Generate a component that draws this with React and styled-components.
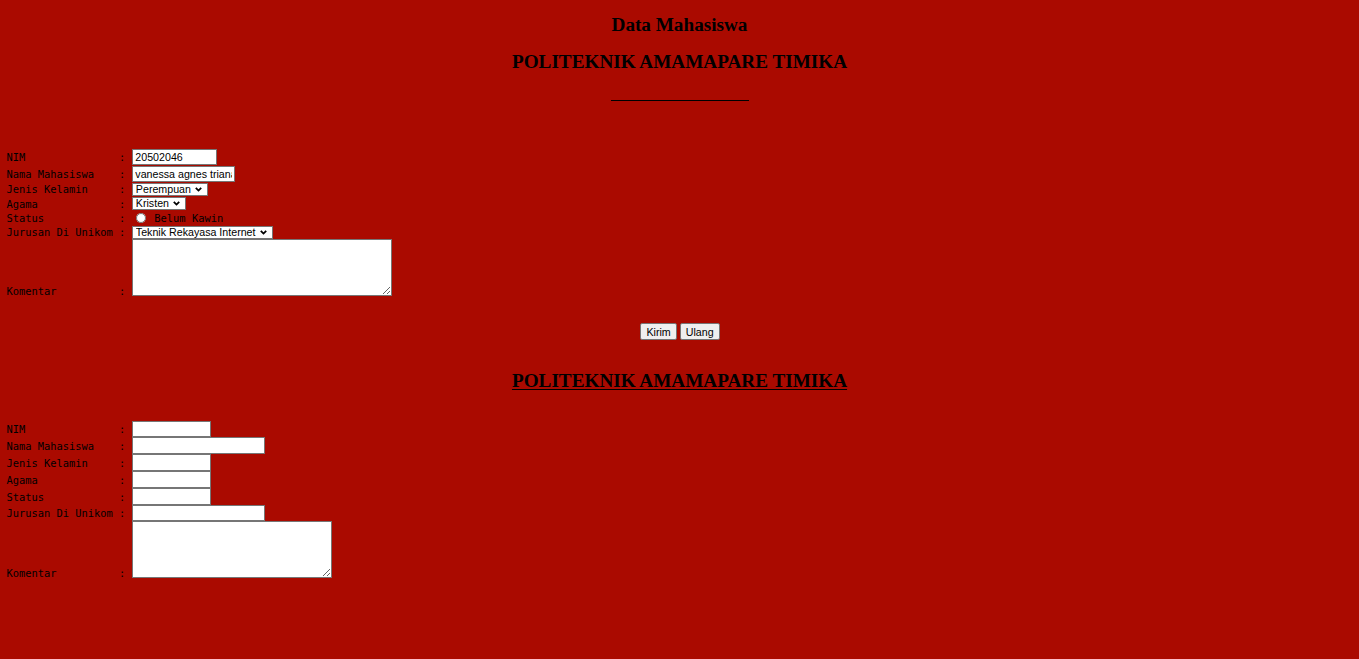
import React from 'react'
import styled, { createGlobalStyle } from 'styled-components'

const GlobalStyle = createGlobalStyle`
    html, body {
        margin: 0;
        padding: 0;
        background: #aa0a00;
    }
    body {
        font-family: "Liberation Serif", "Times New Roman", serif;
        color: #000;
    }
`

const Page = styled.div`
    min-height: 659px;
    background: #aa0a00;
    padding: 14px 0 40px 0;
    box-sizing: border-box;
`

const Heading = styled.h3`
    margin: ${p => p.$top || 0}px 0 0 0;
    font-family: "Liberation Serif", "Times New Roman", serif;
    font-size: 19.2px;
    line-height: 22px;
    font-weight: bold;
    text-align: center;
    text-decoration: ${p => (p.$underline ? 'underline' : 'none')};
    text-underline-offset: 2px;
`

const Garis = styled.div`
    width: 138px;
    height: 1px;
    background: #000;
    margin: 27px auto 0 auto;
`

const Formulir = styled.div`
    margin-top: ${p => p.$top}px;
    padding-left: 6.5px;
    font-family: "DejaVu Sans Mono", "Liberation Mono", monospace;
    font-size: 10.4px;
`

const Baris = styled.div`
    display: grid;
    grid-template-columns: 18ch 1ch auto;
    align-items: ${p => (p.$end ? 'end' : 'center')};
    height: ${p => p.$h}px;
    line-height: 12px;
    white-space: pre;
`

const Label = styled.span`
    margin-bottom: ${p => (p.$end ? '-1px' : '0')};
`

const Titik = styled.span`
    margin-bottom: ${p => (p.$end ? '-1px' : '0')};
`

const Isian = styled.div`
    display: flex;
    align-items: center;
    margin-left: 7px;
`

const Masukan = styled.input`
    box-sizing: border-box;
    width: ${p => p.$w}px;
    height: ${p => p.$h || 16}px;
    margin: 0;
    padding: 1px 2px;
    border: 1px solid #767676;
    background: #fff;
    font-family: "Liberation Sans", Arial, sans-serif;
    font-size: 10.67px;
    color: #000;
    outline: none;
`

const KotakPilihan = styled.span`
    box-sizing: border-box;
    display: inline-flex;
    align-items: center;
    gap: 4px;
    height: 13px;
    padding-right: 5px;
    border: 1px solid #767676;
    background: #fff;
`

const Pilihan = styled.select`
    appearance: none;
    -webkit-appearance: none;
    box-sizing: border-box;
    width: ${p => p.$w}px;
    height: 11px;
    margin: 0;
    padding: 0 0 0 2.5px;
    border: none;
    background: transparent;
    font-family: "Liberation Sans", Arial, sans-serif;
    font-size: 10.67px;
    line-height: 11px;
    color: #000;
    outline: none;
`

const Panah = styled.svg`
    width: 7px;
    height: 5px;
    flex: none;
`

const Radio = styled.input`
    width: 10px;
    height: 10px;
    margin: 0 8px 0 4px;
`

const RadioTeks = styled.span`
    font-family: "DejaVu Sans Mono", "Liberation Mono", monospace;
    font-size: 10.4px;
`

const Komentar = styled.textarea`
    box-sizing: border-box;
    width: ${p => p.$w}px;
    height: 57px;
    margin: 0;
    border: 1px solid #767676;
    background: #fff;
    display: block;
`

const Tombol = styled.div`
    display: flex;
    justify-content: center;
    gap: 3px;
    margin-top: 27px;
    padding-left: 1px;
`

const Button = styled.button`
    box-sizing: border-box;
    height: 17px;
    padding: 0 5px;
    border: 1px solid #767676;
    border-radius: 2px;
    background: #efefef;
    font-family: "Liberation Sans", Arial, sans-serif;
    font-size: 10.67px;
    color: #000;
`

function Row({ label, h, end, children }) {
    return (
        <Baris $h={h} $end={end}>
            <Label $end={end}>{label}</Label>
            <Titik $end={end}>:</Titik>
            <Isian>{children}</Isian>
        </Baris>
    )
}

function Select({ value, options, w }) {
    return (
        <KotakPilihan>
            <Pilihan $w={w} defaultValue={value}>
                {options.map(o => (
                    <option key={o}>{o}</option>
                ))}
            </Pilihan>
            <Panah viewBox="0 0 7 5">
                <path d="M0.8 0.9 L3.5 3.6 L6.2 0.9" fill="none" stroke="#000" strokeWidth="1.8" />
            </Panah>
        </KotakPilihan>
    )
}

export default function App() {
    return (
        <Page>
            <GlobalStyle />
            <Heading>Data Mahasiswa</Heading>
            <Heading $top={15}>POLITEKNIK AMAMAPARE TIMIKA</Heading>
            <Garis />

            <Formulir $top={48}>
                <Row label="NIM" h={16}>
                    <Masukan $w={85} defaultValue="20502046" />
                </Row>
                <Row label="Nama Mahasiswa" h={17}>
                    <Masukan $w={103} defaultValue="vanessa agnes triana" />
                </Row>
                <Row label="Jenis Kelamin" h={14}>
                    <Select w={58} value="Perempuan" options={['Perempuan', 'Laki-laki']} />
                </Row>
                <Row label="Agama" h={15}>
                    <Select w={36} value="Kristen" options={['Islam', 'Kristen', 'Hindu']} />
                </Row>
                <Row label="Status" h={14}>
                    <Radio type="radio" name="status" />
                    <RadioTeks>Belum Kawin</RadioTeks>
                </Row>
                <Row label="Jurusan Di Unikom" h={14}>
                    <Select
                        w={123}
                        value="Teknik Rekayasa Internet"
                        options={['Teknik Rekayasa Internet', 'Teknik Informatika']}
                    />
                </Row>
                <Row label="Komentar" h={57} end>
                    <Komentar $w={260} />
                </Row>
            </Formulir>

            <Tombol>
                <Button>Kirim</Button>
                <Button>Ulang</Button>
            </Tombol>

            <Heading $top={30} $underline>POLITEKNIK AMAMAPARE TIMIKA</Heading>

            <Formulir $top={29}>
                <Row label="NIM" h={16}>
                    <Masukan $w={79} $h={16} />
                </Row>
                <Row label="Nama Mahasiswa" h={17}>
                    <Masukan $w={133} $h={17} />
                </Row>
                <Row label="Jenis Kelamin" h={17}>
                    <Masukan $w={79} $h={17} />
                </Row>
                <Row label="Agama" h={17}>
                    <Masukan $w={79} $h={17} />
                </Row>
                <Row label="Status" h={17}>
                    <Masukan $w={79} $h={17} />
                </Row>
                <Row label="Jurusan Di Unikom" h={16}>
                    <Masukan $w={133} $h={16} />
                </Row>
                <Row label="Komentar" h={57} end>
                    <Komentar $w={200} />
                </Row>
            </Formulir>
        </Page>
    )
}
